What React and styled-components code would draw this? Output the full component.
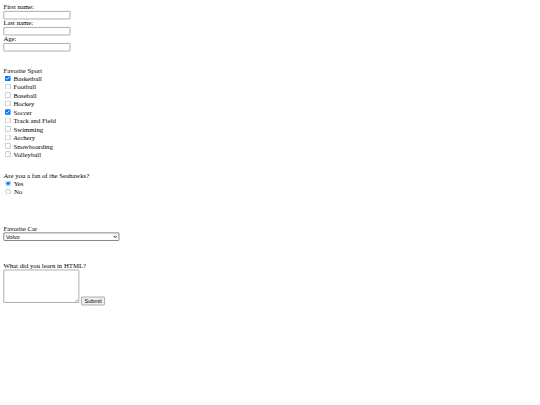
import React from "react";
import styled, { createGlobalStyle } from "styled-components";

const sports = [
  ["Basketball", true],
  ["Football", false],
  ["Baseball", false],
  ["Hockey", false],
  ["Soccer", true],
  ["Track and Field", false],
  ["Swimming", false],
  ["Archery", false],
  ["Snowboarding", false],
  ["Volleyball", false],
];

function App() {
  return (
    <Page>
      <GlobalStyle />
      <Form onSubmit={(e) => e.preventDefault()}>
        First name:
        <br />
        <TextInput type="text" name="fname" />
        <br />
        Last name:
        <br />
        <TextInput type="text" name="lname" />
        <br />
        Age:
        <br />
        <TextInput type="text" name="age" />
        <br />
        <Spacer $h={36} />
        Favorite Sport
        <br />
        {sports.map(([name, checked]) => (
          <React.Fragment key={name}>
            <Check type="checkbox" name="sport" value={name} defaultChecked={checked} /> {name}
            <br />
          </React.Fragment>
        ))}
        <Spacer $h={31} />
        Are you a fan of the Seahawks?
        <br />
        <Radio type="radio" name="fan" value="yes" defaultChecked /> Yes
        <br />
        <Radio type="radio" name="fan" value="no" /> No
        <br />
        <Spacer $h={68} />
        Favorite Car
        <br />
        <Select name="car" defaultValue="volvo">
          <option value="volvo">Volvo</option>
          <option value="saab">Saab</option>
          <option value="fiat">Fiat</option>
          <option value="audi">Audi</option>
        </Select>
        <br />
        <Spacer $h={50} />
        What did you learn in HTML?
        <br />
        <TextArea name="learn" /> <SubmitButton type="submit" value="Submit" />
      </Form>
    </Page>
  );
}

const GlobalStyle = createGlobalStyle`
  body {
    margin: 0;
    background: #ffffff;
    overflow: hidden;
  }
  #root {
    height: 405px;
    overflow: hidden;
  }
`;

// the reference is a 1280px wide page shrunk to 540px
const Page = styled.div`
  width: 1280px;
  transform: scale(0.421875);
  transform-origin: 0 0;
  padding: 8px;
  font-family: "Liberation Serif", "Times New Roman", serif;
  font-size: 16px;
  color: #000000;
`;

const Form = styled.form`
  margin: 0;
`;

const Spacer = styled.div`
  height: ${(p) => p.$h}px;
`;

const TextInput = styled.input`
  box-sizing: border-box;
  width: 159px;
  height: 20px;
  border: 2px solid #a0a0a0;
  border-radius: 2px;
  font-family: "Liberation Sans", Arial, sans-serif;
  font-size: 13.33px;
`;

const Check = styled.input`
  margin: 3px 3px 3.3px 4px;
`;

const Radio = styled.input`
  margin: 3px 3px 0 5px;
`;

const Select = styled.select`
  box-sizing: border-box;
  width: 275px;
  height: 20px;
  border: 2px solid #6f6f6f;
  border-radius: 2px;
  background: #ffffff;
  color: #000000;
  font-family: "Liberation Sans", Arial, sans-serif;
  font-size: 13.33px;
`;

const TextArea = styled.textarea`
  box-sizing: border-box;
  width: 180px;
  height: 79px;
  border: 2px solid #a0a0a0;
  border-radius: 2px;
  vertical-align: baseline;
`;

const SubmitButton = styled.input`
  font-family: "Liberation Sans", Arial, sans-serif;
  font-size: 13.33px;
  padding: 1px 6px;
  border: 2px solid #a0a0a0;
  border-radius: 3px;
  background: #efefef;
  color: #000000;
`;

export default App;
